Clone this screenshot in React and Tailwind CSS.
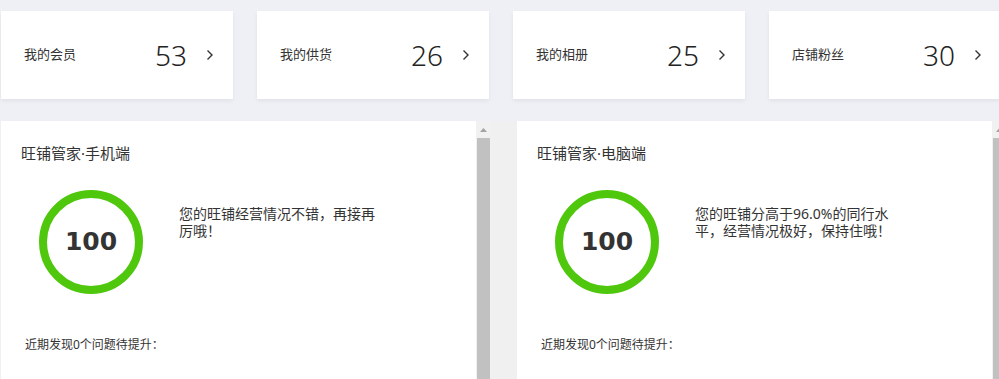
const font = { fontFamily: '"Microsoft YaHei", "Noto Sans", "Noto Sans CJK SC", sans-serif' };

const stats = [
  { label: '我的会员', value: 53 },
  { label: '我的供货', value: 26 },
  { label: '我的相册', value: 25 },
  { label: '店铺粉丝', value: 30 },
];

const panels = [
  { title: '旺铺管家·手机端', text: '您的旺铺经营情况不错，再接再厉哦！', score: 100 },
  { title: '旺铺管家·电脑端', text: '您的旺铺分高于96.0%的同行水平，经营情况极好，保持住哦！', score: 100 },
];

function StatCard({ label, value }) {
  return (
    <div className="flex h-[88px] w-[232px] shrink-0 items-center bg-white pl-[23px] pr-[19px] shadow-[0_2px_4px_rgba(0,0,0,0.06)]">
      <span className="text-[13px] text-[#333]">{label}</span>
      <span className="ml-auto text-[28px] font-light leading-none text-[#222] [font-family:'Noto_Sans',sans-serif]">{value}</span>
      <svg className="ml-[19px]" width="8" height="12" viewBox="0 0 8 12">
        <path d="M1.5 1.5 L6 6 L1.5 10.5" fill="none" stroke="#333" strokeWidth="1.4" />
      </svg>
    </div>
  );
}

function Ring({ score }) {
  return (
    <div className="relative h-[104px] w-[104px] shrink-0">
      <svg width="104" height="104" viewBox="0 0 104 104">
        <circle cx="52" cy="52" r="48" fill="none" stroke="#4fc70c" strokeWidth="8" />
      </svg>
      <div className="absolute inset-0 flex items-center justify-center text-[25px] font-bold text-[#333] [font-family:'DejaVu_Sans',sans-serif]">
        {score}
      </div>
    </div>
  );
}

function Panel({ title, text, score }) {
  return (
    <div className="flex h-[260px] w-[490px] shrink-0">
      <div className="w-[475px] bg-white pl-[20px] pt-[22px]">
        <div className="text-[15px] leading-[20px] text-[#333]">{title}</div>
        <div className="mt-[27px] flex pl-[18px]">
          <Ring score={score} />
          <p className="ml-[36px] mt-[15px] w-[200px] text-[14px] leading-[17px] text-[#333]">{text}</p>
        </div>
        <div className="mt-[42px] pl-[4px] text-[12px] text-[#333]">近期发现0个问题待提升：</div>
      </div>
      <div className="flex w-[15px] flex-col items-center bg-[#f1f1f1]">
        <div className="flex h-[17px] items-center justify-center">
          <svg width="7" height="4" viewBox="0 0 7 4"><path d="M0 4 L3.5 0 L7 4 Z" fill="#a3a3a3" /></svg>
        </div>
        <div className="w-[13px] flex-1 bg-[#c1c1c1]" />
      </div>
    </div>
  );
}

export default function App() {
  return (
    <div className="h-[379px] w-[999px] overflow-hidden bg-[#f0f0f0]" style={font}>
      <div className="flex gap-[24px] bg-[#eef0f6] pl-[1px] pt-[11px] pb-[22px]">
        {stats.map((s) => (
          <StatCard key={s.label} {...s} />
        ))}
      </div>
      <div className="flex gap-[26px] pl-[1px]">
        {panels.map((p) => (
          <Panel key={p.title} {...p} />
        ))}
      </div>
    </div>
  );
}
